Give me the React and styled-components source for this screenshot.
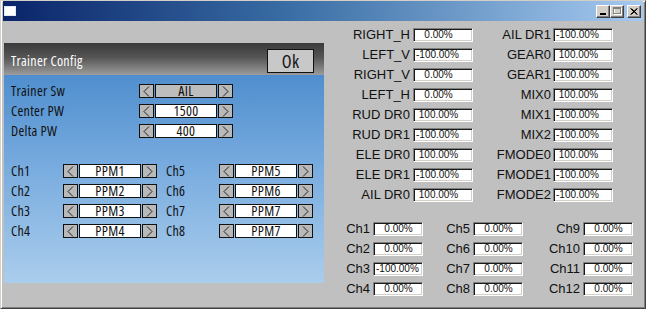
import React from 'react';
import styled, { createGlobalStyle } from 'styled-components';

const GlobalStyle = createGlobalStyle`
  html, body { margin: 0; padding: 0; background: #c0c0c0; }
  body { width: 646px; height: 309px; overflow: hidden; }
`;

const Window = styled.div`
  box-sizing: border-box;
  width: 646px;
  height: 309px;
  background: #c0c0c0;
  border-top: 1px solid #d4d0c8;
  border-left: 1px solid #d4d0c8;
  border-right: 1px solid #404040;
  border-bottom: 1px solid #404040;
  box-shadow: inset 1px 1px #ffffff, inset -1px -1px #808080;
  padding: 0 2px 2px 2px;
  display: flex;
  flex-direction: column;
  font-family: "Liberation Sans", Arial, sans-serif;
`;

const TitleBar = styled.div`
  height: 20px;
  flex: none;
  display: flex;
  align-items: center;
  padding: 0 2px 0 1px;
  background: linear-gradient(to right, #0a246a 0%, #3a6ea5 45%, #a6caf0 100%);
`;

const AppIcon = styled.div`
  width: 12px;
  height: 10px;
  background: #ffffff;
  border: 1px solid #dfe8f8;
  box-sizing: border-box;
`;

const Spacer = styled.div`
  flex: 1;
`;

const CaptionButton = styled.div`
  box-sizing: border-box;
  width: 14px;
  height: 13px;
  margin-left: ${(p) => (p.$gap ? '3px' : '0')};
  background: #d4d0c8;
  border-top: 1px solid #ffffff;
  border-left: 1px solid #ffffff;
  border-right: 1px solid #404040;
  border-bottom: 1px solid #404040;
  box-shadow: inset -1px -1px #808080;
  display: flex;
  align-items: center;
  justify-content: center;
`;

const Body = styled.div`
  flex: 1;
  display: flex;
  min-height: 0;
`;

const Lcd = styled.div`
  width: 320px;
  height: 240px;
  margin: 22px 0 0 1px;
  display: flex;
  flex-direction: column;
  font-family: "Open Sans", "Liberation Sans", sans-serif;
  font-stretch: 75%;
  font-size: 14px;
  letter-spacing: 0.3px;
  color: #111;
  flex: none;
`;

const LcdHeader = styled.div`
  height: 32px;
  flex: none;
  display: flex;
  align-items: center;
  justify-content: space-between;
  padding: 0 10px 0 7px;
  background: linear-gradient(to bottom, #3a3a3a 0%, #555 45%, #9c9c9c 100%);
`;

const HeaderTitle = styled.div`
  color: #ffffff;
  font-size: 14px;
  padding-top: 3px;
`;

const OkButton = styled.div`
  box-sizing: border-box;
  width: 47px;
  height: 24px;
  margin-top: 3px;
  background: #c8c8c8;
  border: 1px solid #111;
  display: flex;
  align-items: center;
  justify-content: center;
  font-size: 18px;
  color: #111;
`;

const LcdContent = styled.div`
  flex: 1;
  background: linear-gradient(to bottom, #4f8ece 0%, #79acdf 45%, #aacdec 100%);
  padding: 9px 0 0 7px;
  display: flex;
  flex-direction: column;
`;

const SettingRow = styled.div`
  display: grid;
  grid-template-columns: 128px auto;
  height: 20px;
  align-items: start;
`;

const ChannelGrid = styled.div`
  display: grid;
  grid-template-columns: 52px 94px 62px 94px;
  grid-auto-rows: 20px;
  align-items: start;
  margin-top: 20px;
`;

const LcdLabel = styled.div`
  line-height: 14px;
  height: 14px;
  padding-left: ${(p) => p.$indent || 0}px;
  white-space: nowrap;
`;

const Spinner = styled.div`
  display: flex;
  gap: 1px;
  height: 14px;
`;

const ArrowBtn = styled.div`
  box-sizing: border-box;
  width: 15px;
  height: 14px;
  background: #b9b9b9;
  border: 1px solid #111;
  display: flex;
  align-items: center;
  justify-content: center;
`;

const ValueField = styled.div`
  box-sizing: border-box;
  width: 62px;
  height: 14px;
  background: ${(p) => (p.$active ? '#bdbdbd' : '#ffffff')};
  border: 1px solid #111;
  text-align: center;
  line-height: 12px;
  font-size: 14px;
  color: #111;
`;

const RightPane = styled.div`
  flex: 1;
  display: flex;
  flex-direction: column;
  padding: 4px 0 0 12px;
  color: #111;
`;

const InputGrid = styled.div`
  display: grid;
  grid-template-columns: ${(p) => p.$cols};
  grid-auto-rows: 20px;
  align-items: center;
  margin-top: ${(p) => p.$top || 0}px;
`;

const FieldLabel = styled.div`
  font-size: 13px;
  text-align: right;
  padding-right: ${(p) => p.$pad ?? 3}px;
  white-space: nowrap;
  line-height: 14px;
`;

const ValueBox = styled.div`
  box-sizing: border-box;
  width: ${(p) => p.$w}px;
  height: 14px;
  background: #ffffff;
  border-top: 1px solid #808080;
  border-left: 1px solid #808080;
  border-right: 1px solid #ffffff;
  border-bottom: 1px solid #ffffff;
  box-shadow: inset 1px 1px #1a1a1a, inset -1px -1px #d4d0c8;
  font-size: 10px;
  line-height: 12px;
  padding-left: 2px;
  white-space: pre;
  overflow: hidden;
  color: #111;
`;

const Chevron = ({ dir }) => (
  <svg width="7" height="11" viewBox="0 0 7 11">
    <polyline
      points={dir === 'left' ? '6,0.5 1,5.5 6,10.5' : '1,0.5 6,5.5 1,10.5'}
      fill="none"
      stroke="#222"
      strokeWidth="1"
    />
  </svg>
);

const SpinBox = ({ value, active }) => (
  <Spinner>
    <ArrowBtn><Chevron dir="left" /></ArrowBtn>
    <ValueField $active={active}>{value}</ValueField>
    <ArrowBtn><Chevron dir="right" /></ArrowBtn>
  </Spinner>
);

const fmt = (v) => {
  const s = v.toFixed(2);
  return s.padStart(7, ' ') + '%';
};

const topRows = [
  ['RIGHT_H', 0, 'AIL DR1', -100],
  ['LEFT_V', -100, 'GEAR0', 100],
  ['RIGHT_V', 0, 'GEAR1', -100],
  ['LEFT_H', 0, 'MIX0', 100],
  ['RUD DR0', 100, 'MIX1', -100],
  ['RUD DR1', -100, 'MIX2', -100],
  ['ELE DR0', 100, 'FMODE0', 100],
  ['ELE DR1', -100, 'FMODE1', -100],
  ['AIL DR0', 100, 'FMODE2', -100],
];

const chOut = [0, 0, -100, 0, 0, 0, 0, 0, 0, 0, 0, 0];

const channels = [
  ['Ch1', 'PPM1', 'Ch5', 'PPM5'],
  ['Ch2', 'PPM2', 'Ch6', 'PPM6'],
  ['Ch3', 'PPM3', 'Ch7', 'PPM7'],
  ['Ch4', 'PPM4', 'Ch8', 'PPM7'],
];

export default function App() {
  return (
    <>
      <GlobalStyle />
      <Window>
        <TitleBar>
          <AppIcon />
          <Spacer />
          <CaptionButton>
            <svg width="6" height="8" viewBox="0 0 6 8"><rect x="0" y="6" width="6" height="2" fill="#000" /></svg>
          </CaptionButton>
          <CaptionButton>
            <svg width="9" height="8" viewBox="0 0 9 8">
              <rect x="1.5" y="1.5" width="7" height="6" fill="none" stroke="#fff" />
              <rect x="0.5" y="0.5" width="7" height="6" fill="none" stroke="#808080" />
              <rect x="0.5" y="1" width="7" height="1" fill="#808080" />
            </svg>
          </CaptionButton>
          <CaptionButton $gap>
            <svg width="8" height="7" viewBox="0 0 8 7">
              <path d="M0.5 0.5 L7 6.5 M7 0.5 L0.5 6.5 M1.5 0.5 L7.5 6.5 M7.5 0.5 L1.5 6.5" stroke="#000" strokeWidth="1" fill="none" />
            </svg>
          </CaptionButton>
        </TitleBar>
        <Body>
          <Lcd>
            <LcdHeader>
              <HeaderTitle>Trainer Config</HeaderTitle>
              <OkButton>Ok</OkButton>
            </LcdHeader>
            <LcdContent>
              <SettingRow>
                <LcdLabel>Trainer Sw</LcdLabel>
                <SpinBox value="AIL" active />
              </SettingRow>
              <SettingRow>
                <LcdLabel>Center PW</LcdLabel>
                <SpinBox value="1500" />
              </SettingRow>
              <SettingRow>
                <LcdLabel>Delta PW</LcdLabel>
                <SpinBox value="400" />
              </SettingRow>
              <ChannelGrid>
                {channels.map(([a, av, b, bv]) => (
                  <React.Fragment key={a}>
                    <LcdLabel>{a}</LcdLabel>
                    <SpinBox value={av} />
                    <LcdLabel $indent={9}>{b}</LcdLabel>
                    <SpinBox value={bv} />
                  </React.Fragment>
                ))}
              </ChannelGrid>
            </LcdContent>
          </Lcd>
          <RightPane>
            <InputGrid $cols="77px 60px 80px 60px">
              {topRows.map(([a, av, b, bv]) => (
                <React.Fragment key={a}>
                  <FieldLabel>{a}</FieldLabel>
                  <ValueBox $w={60}>{fmt(av)}</ValueBox>
                  <FieldLabel $pad={2}>{b}</FieldLabel>
                  <ValueBox $w={60}>{fmt(bv)}</ValueBox>
                </React.Fragment>
              ))}
            </InputGrid>
            <InputGrid $cols="37px 50px 50px 50px 60px 50px" $top={14}>
              {[0, 1, 2, 3].map((r) => (
                <React.Fragment key={r}>
                  <FieldLabel>{`Ch${r + 1}`}</FieldLabel>
                  <ValueBox $w={50}>{fmt(chOut[r])}</ValueBox>
                  <FieldLabel>{`Ch${r + 5}`}</FieldLabel>
                  <ValueBox $w={50}>{fmt(chOut[r + 4])}</ValueBox>
                  <FieldLabel>{`Ch${r + 9}`}</FieldLabel>
                  <ValueBox $w={50}>{fmt(chOut[r + 8])}</ValueBox>
                </React.Fragment>
              ))}
            </InputGrid>
          </RightPane>
        </Body>
      </Window>
    </>
  );
}
